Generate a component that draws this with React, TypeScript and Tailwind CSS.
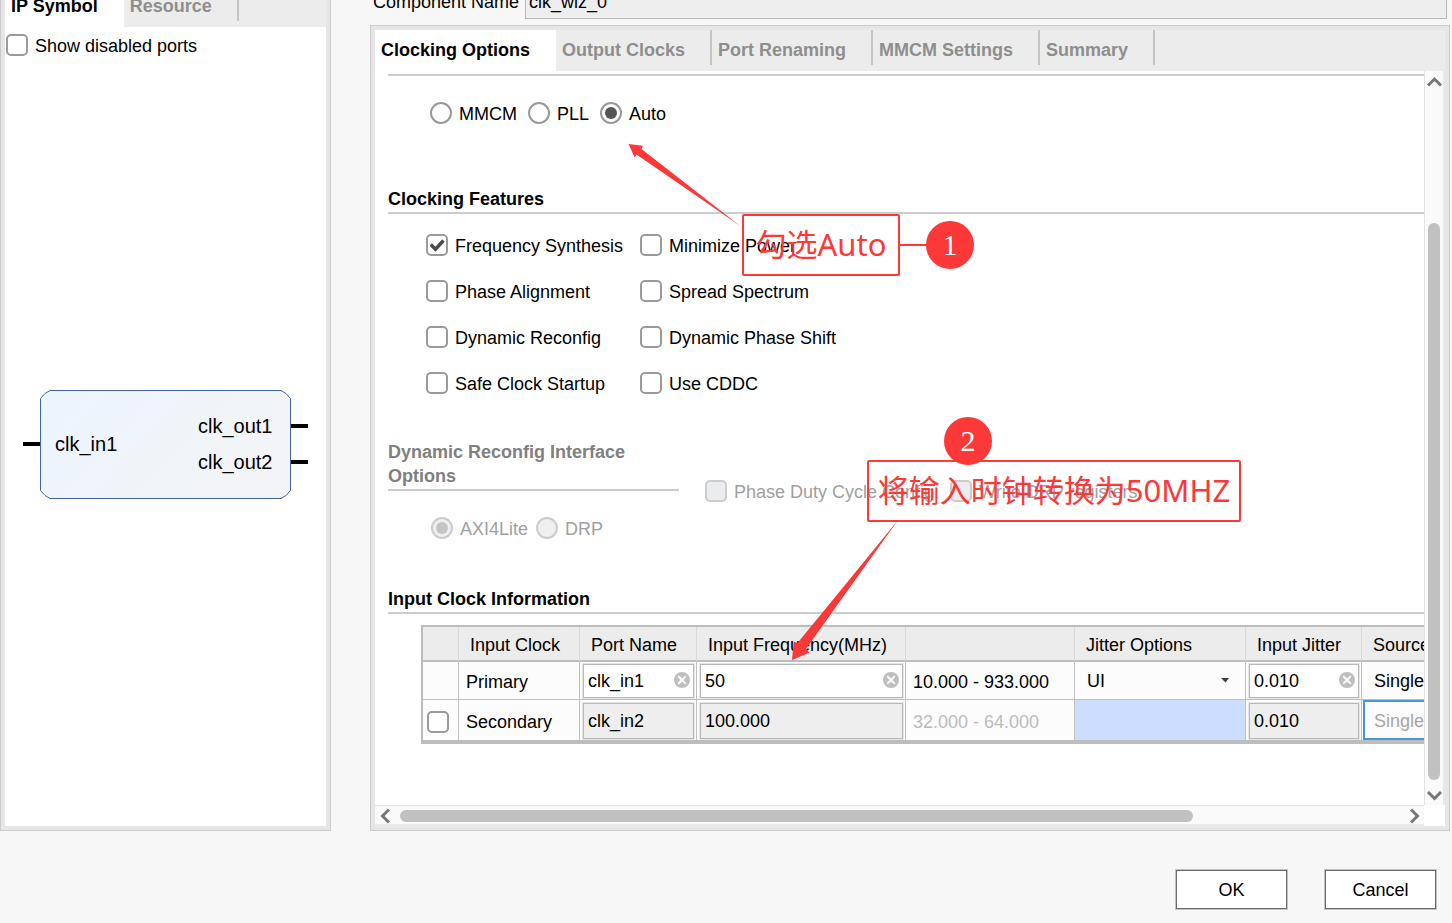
import { useState, type ReactNode } from "react";
import clsx from "clsx";

const tabs = ["Clocking Options", "Output Clocks", "Port Renaming", "MMCM Settings", "Summary"];

const features = [
  { label: "Frequency Synthesis", checked: true },
  { label: "Minimize Power", checked: false },
  { label: "Phase Alignment", checked: false },
  { label: "Spread Spectrum", checked: false },
  { label: "Dynamic Reconfig", checked: false },
  { label: "Dynamic Phase Shift", checked: false },
  { label: "Safe Clock Startup", checked: false },
  { label: "Use CDDC", checked: false },
];

export default function App() {
  return (
    <div className="relative flex h-screen flex-col overflow-hidden bg-[#f7f7f7] font-['Liberation_Sans',Arial,sans-serif] text-lg leading-6 text-black">
      <main className="flex min-h-0 flex-1 gap-[39px] pr-[2px]">
        {/* Left: symbol preview */}
        <section className="-mt-[19px] flex w-[331px] shrink-0 flex-col border border-[#cbcbcb] bg-[#e6e6e6] p-1">
          <TabBar items={["IP Symbol", "Resource"]} />
          <div className="flex flex-1 flex-col bg-white">
            <div className="flex h-9 items-center pl-px">
              <Check label="Show disabled ports" />
            </div>
            <div className="flex flex-1 items-center justify-center">
              <IpSymbol />
            </div>
          </div>
        </section>

        {/* Right: customisation pages */}
        <section className="-mt-[15px] flex min-w-0 flex-1 flex-col gap-[6px]">
          <div className="flex items-center px-[3px]">
            <label htmlFor="component-name" className="w-[152px] shrink-0">
              Component Name
            </label>
            <input
              id="component-name"
              readOnly
              defaultValue="clk_wiz_0"
              className="h-[34px] min-w-0 flex-1 border border-[#b8b8b8] bg-[#eeeeee] px-[3px] outline-none"
            />
          </div>

          <div className="flex min-h-0 flex-1 flex-col border border-[#cbcbcb] bg-[#e6e6e6] p-1">
            <TabBar items={tabs} />
            <div className="flex min-h-0 flex-1 bg-white">
              <div className="flex min-w-0 flex-1 flex-col">
                <ClockingOptions />
                <HorizontalScrollbar />
              </div>
              <VerticalScrollbar />
            </div>
          </div>
        </section>
      </main>

      <footer className="flex shrink-0 justify-end gap-[38px] pb-[14px] pr-4 pt-[39px]">
        <DialogButton>OK</DialogButton>
        <DialogButton>Cancel</DialogButton>
      </footer>

      <Annotations />
    </div>
  );
}

function TabBar({ items }: { items: string[] }) {
  return (
    <div role="tablist" className="flex h-[41px] shrink-0 overflow-hidden bg-[#ececec] font-bold">
      {items.map((name, i) => (
        <div key={name} className={clsx("flex shrink-0", i === 0 && "bg-white")}>
          <button
            role="tab"
            aria-selected={i === 0}
            className={clsx(
              "whitespace-nowrap pb-[2px] pl-[6px]",
              i === 0 ? "pr-[26px] text-black" : "pr-[25px] text-[#8e8e8e]",
            )}
          >
            {name}
          </button>
          {i > 0 && <span className="h-[35px] w-[2px] bg-[#c4c4c4]" aria-hidden />}
        </div>
      ))}
    </div>
  );
}

function ClockingOptions() {
  return (
    <div className="min-h-0 flex-1 overflow-hidden pl-[13px] pt-[3px]">
      <hr className="h-[2px] border-0 bg-[#cccccc]" />
      <div className="mt-[26px] flex gap-[11px] pl-[42px]">
        <Radio name="primitive" label="MMCM" />
        <Radio name="primitive" label="PLL" />
        <Radio name="primitive" label="Auto" checked />
      </div>

      <SectionTitle className="mt-[63px]">Clocking Features</SectionTitle>
      <div className="mt-5 grid grid-cols-[214px_auto] justify-start gap-y-6 pl-[38px]">
        {features.map((f) => (
          <Check key={f.label} label={f.label} checked={f.checked} />
        ))}
      </div>

      <div className="mt-[46px] flex items-center gap-[26px]">
        <div className="w-[291px] pb-[3px]">
          <SectionTitle className="text-[#808080]">Dynamic Reconfig Interface Options</SectionTitle>
          <div className="mt-[26px] flex gap-2 pl-[43px]">
            <Radio name="interface" label="AXI4Lite" checked disabled />
            <Radio name="interface" label="DRP" disabled />
          </div>
        </div>
        <div className="flex gap-4">
          <Check label="Phase Duty Cycle Config" disabled />
          <Check label="Write DRP registers" disabled />
        </div>
      </div>

      <SectionTitle className="mt-[45px]">Input Clock Information</SectionTitle>
      <ClockTable />
    </div>
  );
}

function SectionTitle({ children, className }: { children: ReactNode; className?: string }) {
  return <h2 className={clsx("border-b-2 border-[#cccccc] pb-px font-bold", className)}>{children}</h2>;
}

function Check({ label, checked, disabled }: { label?: string; checked?: boolean; disabled?: boolean }) {
  const [on, setOn] = useState(!!checked);
  return (
    <label className={clsx("flex h-[22px] items-center gap-[7px] whitespace-nowrap", disabled && "text-[#a0a0a0]")}>
      <span className="relative size-[22px] shrink-0">
        <input
          type="checkbox"
          aria-label={label ?? "Enable secondary clock"}
          checked={on}
          disabled={disabled}
          onChange={() => setOn(!on)}
          className={clsx(
            "block size-[22px] appearance-none rounded-[5px] border-2",
            disabled ? "border-[#cccccc] bg-[#ebecee]" : "border-[#9a9a9a] bg-white",
          )}
        />
        {on && (
          <svg viewBox="0 0 22 22" className="pointer-events-none absolute inset-0" fill="none" aria-hidden>
            <path d="M4.800 10.500l4.700 4.700L17.500 6.500" stroke="#4a4a4a" strokeWidth="3.400" />
          </svg>
        )}
      </span>
      {label && <span className="pt-[2px]">{label}</span>}
    </label>
  );
}

function Radio({
  name,
  label,
  checked,
  disabled,
}: {
  name: string;
  label: string;
  checked?: boolean;
  disabled?: boolean;
}) {
  return (
    <label className={clsx("flex h-[22px] items-center gap-[7px] whitespace-nowrap", disabled && "text-[#a0a0a0]")}>
      <span className="relative size-[22px] shrink-0">
        <input
          type="radio"
          name={name}
          defaultChecked={checked}
          disabled={disabled}
          className={clsx(
            "peer block size-[22px] appearance-none rounded-full border-2",
            disabled ? "border-[#cccccc] bg-[#eeeff1]" : "border-[#999999] bg-white",
          )}
        />
        <span
          className={clsx(
            "pointer-events-none absolute inset-[5px] hidden rounded-full peer-checked:block",
            disabled ? "bg-[#c4c4c4]" : "bg-[#555555]",
          )}
        />
      </span>
      <span className="pt-[2px]">{label}</span>
    </label>
  );
}

function ClockTable() {
  const head = "border-b-2 border-b-[#bdbdbd] border-r border-r-[#d9d9d9] pl-[11px] pt-[2px] text-left font-normal";
  const cell = "border-b border-r border-[#c0c0c0] bg-[#fcfcfc]";
  const last = "border-r border-[#c0c0c0] bg-[#fcfcfc]";
  return (
    <div className="ml-[33px] mt-[11px] w-max border-2 border-b-4 border-[#bdbdbd]">
      <table className="w-[1099px] table-fixed border-separate border-spacing-0 whitespace-nowrap">
        <colgroup>
          <col className="w-[36px]" />
          <col className="w-[121px]" />
          <col className="w-[117px]" />
          <col className="w-[209px]" />
          <col className="w-[169px]" />
          <col className="w-[171px]" />
          <col className="w-[116px]" />
          <col className="w-[160px]" />
        </colgroup>
        <thead>
          <tr className="h-[35px] bg-[#ececec]">
            <th className={head} />
            <th className={head}>Input Clock</th>
            <th className={head}>Port Name</th>
            <th className={head}>Input Frequency(MHz)</th>
            <th className={head} />
            <th className={head}>Jitter Options</th>
            <th className={head}>Input Jitter</th>
            <th className={head}>Source</th>
          </tr>
        </thead>
        <tbody>
          <tr className="h-[38px]">
            <td className={cell} />
            <td className={clsx(cell, "pl-[7px] pt-[2px]")}>Primary</td>
            <td className={cell}>
              <CellInput label="Primary port name" value="clk_in1" clearable />
            </td>
            <td className={cell}>
              <CellInput label="Primary input frequency" value="50" clearable />
            </td>
            <td className={clsx(cell, "pl-[7px] pt-[2px]")}>10.000 - 933.000</td>
            <td className={clsx(cell, "relative")}>
              <select aria-label="Primary jitter options" className="w-full appearance-none pl-3 outline-none">
                <option>UI</option>
              </select>
              <svg
                viewBox="0 0 8 5"
                className="pointer-events-none absolute right-4 top-4 h-[5px] w-2"
                aria-hidden
              >
                <path d="M0 0h8L4.500 4.500z" fill="#404040" />
              </svg>
            </td>
            <td className={cell}>
              <CellInput label="Primary input jitter" value="0.010" clearable />
            </td>
            <td className={cell}>
              <select aria-label="Primary source" className="w-full appearance-none pl-3 outline-none">
                <option>Single</option>
              </select>
            </td>
          </tr>
          <tr className="h-[40px]">
            <td className={clsx(last, "pl-1 pt-1")}>
              <Check />
            </td>
            <td className={clsx(last, "pl-[7px] pt-1")}>Secondary</td>
            <td className={clsx(last, "pt-[2px]")}>
              <CellInput label="Secondary port name" value="clk_in2" />
            </td>
            <td className={clsx(last, "pt-[2px]")}>
              <CellInput label="Secondary input frequency" value="100.000" />
            </td>
            <td className={clsx(last, "pl-[7px] pt-1 text-[#bcbcbc]")}>32.000 - 64.000</td>
            <td className="border-r border-[#c0c0c0] bg-[#ccddff]" />
            <td className={clsx(last, "pt-[2px]")}>
              <CellInput label="Secondary input jitter" value="0.010" />
            </td>
            <td className={clsx(last, "pl-px")}>
              <select
                aria-label="Secondary source"
                disabled
                className="block h-[40px] w-full appearance-none border-2 border-[#4398d6] pl-[9px] pt-[2px] text-[#a6a6a6] opacity-100"
              >
                <option>Single</option>
              </select>
            </td>
          </tr>
        </tbody>
      </table>
    </div>
  );
}

function CellInput({ label, value, clearable }: { label: string; value: string; clearable?: boolean }) {
  const [text, setText] = useState(value);
  return (
    <div className="relative pl-[3px] pr-[2px]">
      <input
        aria-label={label}
        value={text}
        readOnly={!clearable}
        onChange={(e) => setText(e.target.value)}
        className={clsx(
          "block w-full border border-[#b9b9b9] px-1 shadow-[0_0_0_1px_#e6e6e6] outline-none",
          clearable ? "h-[34px] bg-white pt-[2px]" : "h-[36px] bg-[#eeeeee]",
        )}
      />
      {clearable && (
        <button
          type="button"
          aria-label={`Clear ${label.toLowerCase()}`}
          onClick={() => setText("")}
          className="absolute right-[6px] top-2 size-4"
        >
          <svg viewBox="0 0 16 16" aria-hidden>
            <circle cx="8" cy="8" r="8" fill="#bfbfbf" />
            <path d="M4.300 4.300l7.400 7.400M11.700 4.300l-7.400 7.400" stroke="#fff" strokeWidth="2" />
          </svg>
        </button>
      )}
    </div>
  );
}

function IpSymbol() {
  return (
    <svg width="286" height="110" viewBox="0 0 286 110" role="img" aria-label="clk_wiz_0 ports">
      <defs>
        <linearGradient id="body" x1="0" y1="0" x2="1" y2="0.4">
          <stop offset="0" stopColor="#eaf5fe" />
          <stop offset="0.45" stopColor="#f0f4fc" />
          <stop offset="0.6" stopColor="#f0f4f8" />
          <stop offset="1" stopColor="#f3f4f7" />
        </linearGradient>
      </defs>
      <path
        d="M27 .5h231l5 3l4.500 5v92l-4.500 5l-5 3H27l-5-3l-4.500-5v-92l4.500-5z"
        fill="url(#body)"
        stroke="#4063a8"
      />
      <path d="M0 54h17M268 36h17M268 72h17" stroke="#000" strokeWidth="4" />
      <g fontSize="20" fill="#000">
        <text x="32" y="61">clk_in1</text>
        <text x="175" y="43">clk_out1</text>
        <text x="175" y="79">clk_out2</text>
      </g>
    </svg>
  );
}

function Chevron({ d }: { d: string }) {
  return (
    <svg width="16" height="16" viewBox="0 0 16 16" fill="none" aria-hidden>
      <path d={d} stroke="#777777" strokeWidth="3" />
    </svg>
  );
}

function VerticalScrollbar() {
  return (
    <div className="mb-[21px] flex w-[21px] shrink-0 flex-col items-center border-l border-r-2 border-l-[#e2e2e2] border-r-[#e9e9e9] bg-[#fafafa]">
      <button aria-label="Scroll up" className="flex h-[22px] items-center">
        <Chevron d="M2 11.500L8.500 5l6.500 6.500" />
      </button>
      <div className="flex w-full flex-1 flex-col items-center">
        <div className="flex-[130]" />
        <div className="w-3 flex-[557] rounded-full bg-[#c1c1c1]" />
        <div className="flex-[5]" />
      </div>
      <button aria-label="Scroll down" className="flex h-5 items-center">
        <Chevron d="M2 5L8.500 11.500L15 5" />
      </button>
    </div>
  );
}

function HorizontalScrollbar() {
  return (
    <div className="flex h-[21px] shrink-0 items-center border-b-2 border-t border-b-[#e9e9e9] border-t-[#e2e2e2] bg-[#fafafa] pt-px">
      <button aria-label="Scroll left" className="flex w-[22px] justify-center">
        <Chevron d="M11 1.500L4.500 8l6.500 6.500" />
      </button>
      <div className="flex flex-1">
        <div className="flex-[3]" />
        <div className="h-3 flex-[793] rounded-full bg-[#c1c1c1]" />
        <div className="flex-[211]" />
      </div>
      <button aria-label="Scroll right" className="flex w-5 justify-center">
        <Chevron d="M5 1.500L11.500 8L5 14.500" />
      </button>
    </div>
  );
}

function DialogButton({ children }: { children: ReactNode }) {
  return (
    <button className="h-[39px] w-[111px] border border-[#6a6a6a] bg-white shadow-[0_0_0_1px_#c2c2c2]">
      {children}
    </button>
  );
}

// Numbered callouts laid over the dialog
function Annotations() {
  return (
    <div className="pointer-events-none absolute inset-0 overflow-hidden font-['Noto_Sans','Noto_Sans_CJK_SC',sans-serif] text-[31px] leading-[56px] text-[#fd3838]">
      <svg className="absolute left-0 top-0" width="1452" height="923" fill="#fd3838" aria-hidden>
        <path d="M628.500 144L643 145.700L641.500 149L741 226.500L636.500 154.500L634.700 157.500Z" />
        <path d="M792 660L793.700 641.500L797.500 643L898.500 519.500L805.500 649.500L809.500 652.500Z" />
        <path d="M900 244h27v2h-27z" />
      </svg>
      <div className="absolute left-[742px] top-[214px] h-[62px] w-[158px] whitespace-nowrap rounded-[2px] border-2 border-current text-center">
        勾选Auto
      </div>
      <Badge className="left-[926px] top-[221px]">1</Badge>
      <div className="absolute left-[867px] top-[460px] h-[62px] w-[374px] whitespace-nowrap rounded-[2px] border-2 border-current text-center">
        将输入时钟转换为50MHZ
      </div>
      <Badge className="left-[944px] top-[417px]">2</Badge>
    </div>
  );
}

function Badge({ children, className }: { children: ReactNode; className: string }) {
  return (
    <span
      className={clsx(
        "absolute size-12 rounded-full bg-[#fd3838] text-center font-['Liberation_Serif',serif] text-[30px] leading-[48px] text-white",
        className,
      )}
    >
      {children}
    </span>
  );
}
